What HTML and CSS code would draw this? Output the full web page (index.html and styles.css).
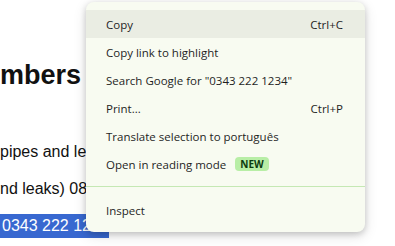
FILE: index.html
```html
<!DOCTYPE html>
<html lang="en">

<head>
    <meta charset="UTF-8">
    <title>Context menu</title>
    <link rel="stylesheet" href="styles.css">
</head>

<body>
    <div class="page">
        <h2 class="title">mbers</h2>
        <p class="line first">pipes and leaks</p>
        <p class="line">nd leaks) 0800 123 4567</p>
        <p class="line"><span class="sel">0343 222 1234</span></p>
    </div>

    <div class="menu">
        <div class="item active"><span>Copy</span><span class="key">Ctrl+C</span></div>
        <div class="item"><span>Copy link to highlight</span></div>
        <div class="item"><span>Search Google for "0343 222 1234"</span></div>
        <div class="item"><span>Print...</span><span class="key">Ctrl+P</span></div>
        <div class="item"><span>Translate selection to português</span></div>
        <div class="item"><span>Open in reading mode</span><span class="badge">NEW</span></div>
        <div class="sep"></div>
        <div class="item"><span>Inspect</span></div>
    </div>
</body>

</html>
```

FILE: styles.css
```css
* {
    margin: 0;
    padding: 0;
    box-sizing: border-box;
}

body {
    width: 395px;
    height: 246px;
    overflow: hidden;
    background: #fff;
    font-family: "Liberation Sans", Arial, sans-serif;
    color: #111;
}

.page {
    white-space: nowrap;
}

.title {
    margin-top: 59px;
    font-size: 27px;
    line-height: 32px;
    font-weight: bold;
    color: #111;
}

.line {
    margin-top: 13px;
    font-size: 16px;
    line-height: 24px;
}

.line.first {
    margin-top: 49px;
}

.sel {
    display: inline-block;
    padding-left: 2px;
    background: #3868d0;
    color: #fff;
}

.menu {
    position: absolute;
    left: 86px;
    top: 2px;
    width: 279px;
    padding: 8px 0 8px;
    background: #f8fbf1;
    border-radius: 8px;
    box-shadow: 0 2px 6px rgba(0, 0, 0, 0.18), 0 4px 14px rgba(0, 0, 0, 0.12);
    font-family: "Open Sans", "Noto Sans", sans-serif;
    font-size: 11.5px;
    color: #1f1f1f;
}

.item {
    display: flex;
    align-items: center;
    height: 28px;
    padding: 0 22px 0 20px;
}

.item.active {
    background: #eaede3;
}

.key {
    margin-left: auto;
}

.badge {
    margin-left: 9px;
    padding: 0 5px;
    height: 14px;
    line-height: 14px;
    border-radius: 4px;
    background: #b8eea6;
    color: #0d3a10;
    font-size: 10px;
    font-weight: bold;
}

.sep {
    height: 1px;
    margin: 8px 0 9px;
    background: #c5e8b4;
}
```
